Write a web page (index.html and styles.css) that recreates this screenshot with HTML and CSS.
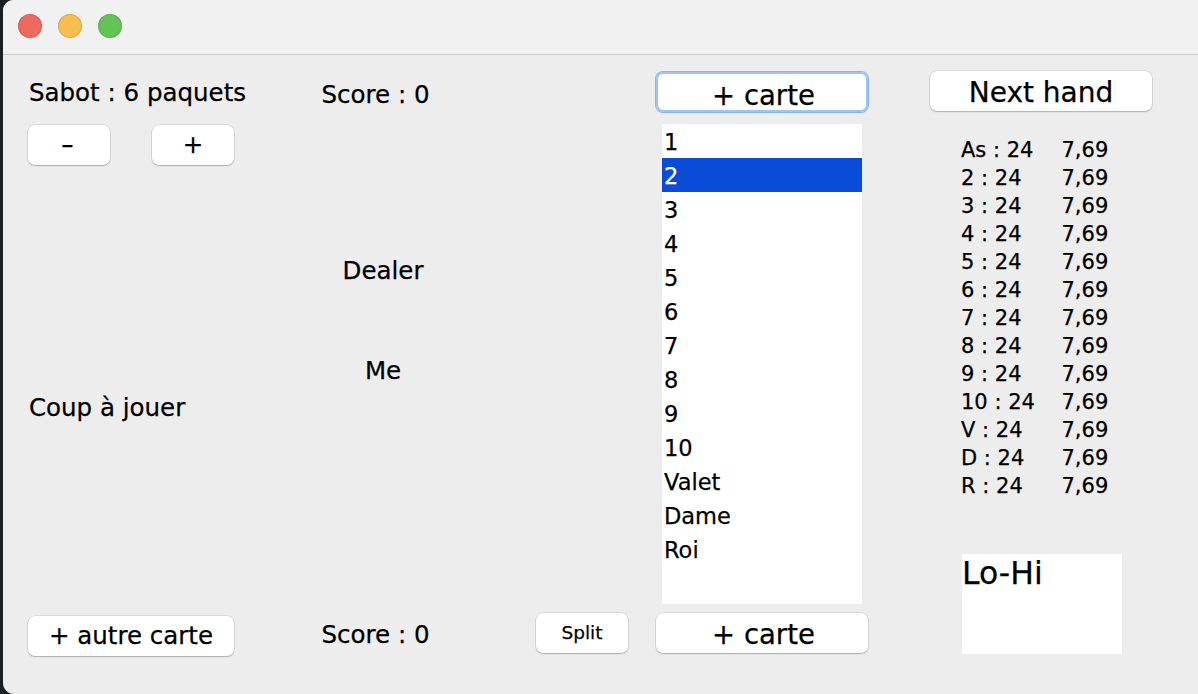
FILE: index.html
```html
<!DOCTYPE html>
<html>
<head>
<meta charset="utf-8">
<title>Blackjack</title>
<link rel="stylesheet" href="styles.css">
</head>
<body>
<div class="window">
  <div class="titlebar">
    <span class="light red"></span>
    <span class="light yellow"></span>
    <span class="light green"></span>
  </div>
  <div class="content">
    <div class="col col-left">
      <div class="label sabot">Sabot : 6 paquets</div>
      <div class="btn-row">
        <button class="btn small"><span class="dash">-</span></button>
        <button class="btn small">+</button>
      </div>
      <div class="label coup">Coup à jouer</div>
      <button class="btn autre">+ autre carte</button>
    </div>
    <div class="col col-score">
      <div class="label score-top">Score : 0</div>
      <div class="label centered dealer">Dealer</div>
      <div class="label centered me">Me</div>
      <div class="label score-bottom">Score : 0</div>
    </div>
    <div class="col col-split">
      <button class="btn split">Split</button>
    </div>
    <div class="col col-cards">
      <button class="btn carte focused">+ carte</button>
      <ul class="list">
        <li>1</li>
        <li class="selected">2</li>
        <li>3</li>
        <li>4</li>
        <li>5</li>
        <li>6</li>
        <li>7</li>
        <li>8</li>
        <li>9</li>
        <li>10</li>
        <li>Valet</li>
        <li>Dame</li>
        <li>Roi</li>
      </ul>
      <button class="btn carte lower">+ carte</button>
    </div>
    <div class="col col-right">
      <button class="btn next">Next hand</button>
      <div class="stats">
        <span>As : 24</span><span>7,69</span>
        <span>2 : 24</span><span>7,69</span>
        <span>3 : 24</span><span>7,69</span>
        <span>4 : 24</span><span>7,69</span>
        <span>5 : 24</span><span>7,69</span>
        <span>6 : 24</span><span>7,69</span>
        <span>7 : 24</span><span>7,69</span>
        <span>8 : 24</span><span>7,69</span>
        <span>9 : 24</span><span>7,69</span>
        <span>10 : 24</span><span>7,69</span>
        <span>V : 24</span><span>7,69</span>
        <span>D : 24</span><span>7,69</span>
        <span>R : 24</span><span>7,69</span>
      </div>
      <div class="lohi">Lo-Hi</div>
    </div>
  </div>
</div>
</body>
</html>
```
FILE: styles.css
```css
* {
  box-sizing: border-box;
}

html, body {
  margin: 0;
  padding: 0;
}

body {
  width: 1198px;
  height: 694px;
  overflow: hidden;
  background: #1d2023;
  padding-left: 3px;
  font-family: "DejaVu Sans", "Liberation Sans", sans-serif;
  color: #000;
  -webkit-text-stroke: 0.25px currentColor;
}

.window {
  width: 1195px;
  height: 694px;
  background: #ededed;
  border-radius: 11px 0 0 11px;
  overflow: hidden;
}

.titlebar {
  height: 55px;
  background: #f1f1f1;
  border-bottom: 1px solid #cdcdcd;
  display: flex;
  align-items: flex-start;
  padding: 14px 0 0 15px;
  gap: 16px;
}

.light {
  width: 24px;
  height: 24px;
  border-radius: 50%;
  border: 1px solid rgba(0, 0, 0, 0.12);
}

.red { background: #ee6a5f; }
.yellow { background: #f5be4f; }
.green { background: #61c454; }

.content {
  display: flex;
  align-items: flex-start;
}

.col {
  display: flex;
  flex-direction: column;
  align-items: flex-start;
}

.label {
  font-size: 24.5px;
  line-height: 34px;
  height: 34px;
  white-space: nowrap;
  padding-left: 1px;
}

.btn {
  font-family: "DejaVu Sans", "Liberation Sans", sans-serif;
  color: #000;
  -webkit-text-stroke: 0.25px currentColor;
  background: #fff;
  border: none;
  border-radius: 7px;
  box-shadow: 0 0 0 0.5px rgba(0, 0, 0, 0.14), 0 1px 1.5px rgba(0, 0, 0, 0.22);
  padding: 0;
  margin: 0;
  height: 40px;
  line-height: 40px;
  display: flex;
  align-items: center;
  justify-content: center;
  white-space: nowrap;
}

/* left column */
.col-left {
  margin-left: 25px;
  width: 207px;
}

.sabot {
  margin-top: 20.5px;
}

.btn-row {
  display: flex;
  gap: 42px;
  margin-top: 15.5px;
}

.btn.small {
  width: 82px;
  font-size: 24.5px;
}

.dash {
  display: inline-block;
  transform: scaleX(1.5);
  margin-right: 3px;
}

.coup {
  margin-top: 225.5px;
}

.btn.autre {
  margin-top: 191.5px;
  width: 206px;
  font-size: 24.5px;
}

/* score column */
.col-score {
  margin-left: 85.5px;
  width: 124px;
}

.label.centered {
  align-self: stretch;
  text-align: center;
}

.score-top {
  margin-top: 22.6px;
}

.dealer {
  margin-top: 142.4px;
}

.me {
  margin-top: 66px;
}

.score-bottom {
  margin-top: 230px;
}

/* split column */
.col-split {
  margin-left: 91.5px;
  width: 92px;
}

.btn.split {
  margin-top: 558px;
  width: 92px;
  font-size: 18.5px;
}

/* cards column */
.col-cards {
  margin-left: 28px;
  width: 212px;
}

.btn.carte {
  width: 212px;
  font-size: 27.5px;
  padding-top: 2px;
  padding-left: 3px;
}

.btn.carte.focused {
  margin-top: 17px;
  padding-top: 5px;
  box-shadow: 0 0 0 1px #86b3ee, inset 0 0 0 2px #9ec4f3;
}

.btn.carte.lower {
  margin-top: 9px;
}

.list {
  list-style: none;
  margin: 12px 0 0 6px;
  padding: 0;
  width: 200px;
  height: 480px;
  background: #fff;
}

.list li {
  height: 34px;
  padding: 2px 0 0 2px;
  line-height: 32px;
  font-size: 22.5px;
  white-space: nowrap;
}

.list li.selected {
  background: #0a4bd8;
  color: #fff;
}

/* right column */
.col-right {
  margin-left: 62px;
  width: 222px;
}

.btn.next {
  margin-top: 16px;
  width: 222px;
  font-size: 28px;
  padding-top: 3px;
}

.stats {
  margin-top: 24.5px;
  margin-left: 31px;
  display: grid;
  grid-template-columns: 100.5px auto;
  grid-auto-rows: 28px;
  font-size: 21px;
  line-height: 28px;
  white-space: nowrap;
}

.lohi {
  margin-top: 54.5px;
  margin-left: 32px;
  width: 160px;
  height: 100px;
  background: #fff;
  font-size: 31.5px;
  line-height: 36px;
  padding-top: 1px;
  white-space: nowrap;
}
```
